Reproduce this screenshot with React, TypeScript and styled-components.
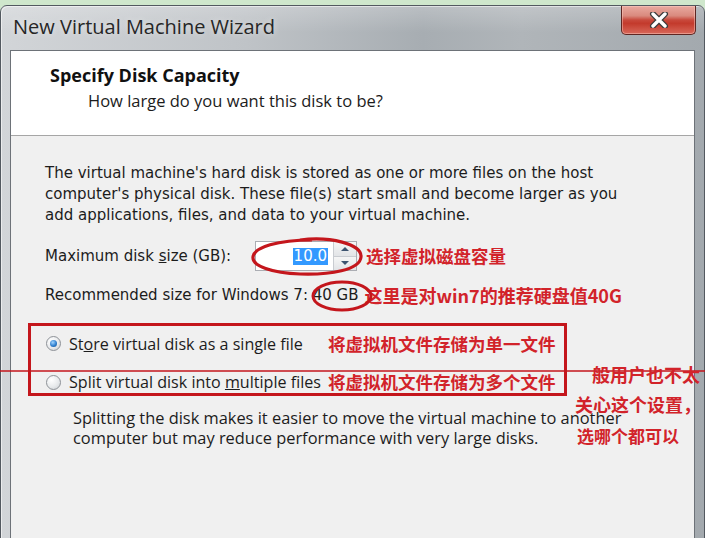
import React from "react";
import styled, { createGlobalStyle } from "styled-components";

const Global = createGlobalStyle`
  html, body { margin: 0; padding: 0; background: #cfe7cc; }
  body { font-family: "DejaVu Sans", sans-serif; }
`;

const RED = "#d2232a";
const STROKE = "#c4161c";

const Page = styled.div`
  position: relative;
  width: 705px;
  height: 538px;
  overflow: hidden;
  background: #cfe7cc;
  padding-top: 5px;
  box-sizing: border-box;
  display: flex;
  flex-direction: column;
`;

const Window = styled.div`
  flex: 1;
  display: flex;
  flex-direction: column;
  background: linear-gradient(90deg, #d2d5d8 0%, #bfc3c7 35%, #a7adb2 60%, #b0b5b9 74%, #a3a9ae 100%);
  border: 1px solid #535960;
  border-bottom: none;
  border-radius: 7px 7px 0 0;
  box-shadow: inset 1px 1px 0 rgba(255, 255, 255, 0.55);
`;

const TitleBar = styled.div`
  height: 44px;
  display: flex;
  justify-content: space-between;
  align-items: flex-start;
  background: linear-gradient(180deg, rgba(255,255,255,0.22) 0%, rgba(255,255,255,0) 60%);
`;

const Title = styled.div`
  font-family: "Open Sans", sans-serif;
  font-size: 20px;
  line-height: 28px;
  color: #262626;
  margin: 7px 0 0 12px;
  text-shadow: 0 0 6px rgba(255, 255, 255, 0.6);
`;

const CloseButton = styled.div`
  width: 75px;
  height: 29px;
  margin-right: 8px;
  box-sizing: border-box;
  border: 1px solid #5e2622;
  border-top: none;
  border-radius: 0 0 5px 5px;
  background: linear-gradient(180deg, #e9aaa0 0%, #d98a7e 35%, #c8493c 50%, #c33a2c 62%, #d8685a 100%);
  box-shadow: inset 0 0 0 1px rgba(255, 210, 200, 0.45);
  display: flex;
  align-items: center;
  justify-content: center;
`;

const Client = styled.div`
  flex: 1;
  margin: 0 9px;
  border: 1px solid #6d7278;
  border-bottom: none;
  background: #f0f0f0;
  display: flex;
  flex-direction: column;
`;

const Header = styled.div`
  height: 85px;
  box-sizing: border-box;
  background: #ffffff;
  border-bottom: 1px solid #a6a6a6;
  padding: 13px 0 0 39px;
  font-family: "Open Sans", sans-serif;
`;

const HeaderTitle = styled.div`
  font-size: 18px;
  font-weight: 700;
  line-height: 22px;
  color: #111;
`;

const HeaderSub = styled.div`
  font-size: 16.5px;
  line-height: 22px;
  color: #1c1c1c;
  margin: 4px 0 0 38px;
`;

const Body = styled.div`
  flex: 1;
  padding-top: 27px;
  display: flex;
  flex-direction: column;
`;

const Para = styled.p`
  margin: 0 0 0 34px;
  font-size: 15px;
  line-height: 21px;
  color: #1c1c1c;
  white-space: nowrap;
`;

const FieldRow = styled.div<{ $h: number; $mt: number }>`
  display: flex;
  align-items: center;
  height: ${(p) => p.$h}px;
  margin: ${(p) => p.$mt}px 0 0 34px;
  font-size: 15px;
  color: #1c1c1c;
  white-space: nowrap;
`;

const FieldLabel = styled.span`
  width: 210px;
`;

const SpinBox = styled.div`
  width: 102px;
  height: 30px;
  box-sizing: border-box;
  border: 1px solid #abadb3;
  background: #fff;
  display: flex;
  align-items: stretch;
`;

const SpinValue = styled.div`
  flex: 1;
  display: flex;
  align-items: center;
  justify-content: flex-end;
  padding-right: 5px;
`;

const Selected = styled.span`
  background: #3399ff;
  color: #fff;
  font-size: 15px;
  line-height: 17px;
  padding: 0 1px;
`;

const SpinButtons = styled.div`
  width: 22px;
  display: flex;
  flex-direction: column;
  border-left: 1px solid #c9ccd1;
`;

const SpinBtn = styled.div<{ $down?: boolean }>`
  flex: 1;
  display: flex;
  align-items: center;
  justify-content: center;
  background: linear-gradient(180deg, #f6f6f6, #e2e4e7);
  border-bottom: ${(p) => (p.$down ? "none" : "1px solid #c9ccd1")};
`;

const Arrow = styled.span<{ $down?: boolean }>`
  width: 0;
  height: 0;
  border-left: 4px solid transparent;
  border-right: 4px solid transparent;
  ${(p) => (p.$down ? "border-top: 4px solid #3d5470;" : "border-bottom: 4px solid #3d5470;")}
`;

const Mark = styled.span<{ $ml?: number; $size?: number }>`
  font-family: "Noto Sans CJK SC", sans-serif;
  font-weight: 700;
  font-size: ${(p) => p.$size ?? 17.5}px;
  line-height: 22px;
  color: ${RED};
  margin-left: ${(p) => p.$ml ?? 0}px;
  white-space: nowrap;
`;

const RadioBox = styled.div`
  margin: 16px 0 0 17px;
  width: 539px;
  height: 73px;
  box-sizing: border-box;
  border: 3px solid ${STROKE};
  padding-left: 15px;
  display: grid;
  grid-template-columns: 282px auto;
  grid-template-rows: 36px 31px;
`;

const RadioCell = styled.label<{ $end?: boolean }>`
  display: flex;
  align-items: ${(p) => (p.$end ? "flex-end" : "center")};
  gap: 8px;
  font-family: "Open Sans", sans-serif;
  font-size: 16.1px;
  line-height: 20px;
  color: #1c1c1c;
  white-space: nowrap;
  padding-bottom: ${(p) => (p.$end ? 1 : 0)}px;
`;

const MarkCell = styled.div<{ $end?: boolean }>`
  display: flex;
  align-items: ${(p) => (p.$end ? "flex-end" : "center")};
`;

const RadioCircle = styled.span<{ $checked?: boolean }>`
  width: 15px;
  height: 15px;
  flex: none;
  box-sizing: border-box;
  border-radius: 50%;
  border: 1px solid #8e9297;
  background: radial-gradient(circle at 35% 30%, #ffffff 0%, #e8eaec 55%, #c9cdd1 100%);
  display: flex;
  align-items: center;
  justify-content: center;
  margin-bottom: 2px;
  &::after {
    content: "";
    display: ${(p) => (p.$checked ? "block" : "none")};
    width: 7px;
    height: 7px;
    border-radius: 50%;
    background: radial-gradient(circle at 40% 35%, #9fd3ff 0%, #2f7fcf 55%, #164f8a 100%);
  }
`;

const Note = styled.p`
  margin: 12px 0 0 62px;
  font-family: "Open Sans", sans-serif;
  font-size: 16.4px;
  line-height: 20px;
  color: #1c1c1c;
  white-space: nowrap;
`;

const Overlay = styled.svg`
  position: absolute;
  left: 0;
  top: 0;
  pointer-events: none;
`;

const SideNote = styled.div<{ $x: number; $y: number; $size: number }>`
  position: absolute;
  left: ${(p) => p.$x}px;
  top: ${(p) => p.$y}px;
  font-family: "Noto Sans CJK SC", sans-serif;
  font-weight: 700;
  font-size: ${(p) => p.$size}px;
  line-height: 20px;
  color: ${RED};
  white-space: nowrap;
`;

export default function App() {
  return (
    <>
      <Global />
      <Page>
        <Window>
          <TitleBar>
            <Title>New Virtual Machine Wizard</Title>
            <CloseButton>
              <svg width="20" height="16" viewBox="0 0 20 16">
                <path d="M4 2 L16 14 M16 2 L4 14" stroke="#3b3b3b" strokeWidth="6" strokeLinecap="round" />
                <path d="M4 2 L16 14 M16 2 L4 14" stroke="#ffffff" strokeWidth="3.4" strokeLinecap="round" />
              </svg>
            </CloseButton>
          </TitleBar>
          <Client>
            <Header>
              <HeaderTitle>Specify Disk Capacity</HeaderTitle>
              <HeaderSub>How large do you want this disk to be?</HeaderSub>
            </Header>
            <Body>
              <Para>
                The virtual machine's hard disk is stored as one or more files on the host
                <br />
                computer's physical disk. These file(s) start small and become larger as you
                <br />
                add applications, files, and data to your virtual machine.
              </Para>
              <FieldRow $h={30} $mt={15}>
                <FieldLabel>
                  Maximum disk <u>s</u>ize (GB):
                </FieldLabel>
                <SpinBox>
                  <SpinValue>
                    <Selected>10.0</Selected>
                  </SpinValue>
                  <SpinButtons>
                    <SpinBtn>
                      <Arrow />
                    </SpinBtn>
                    <SpinBtn $down>
                      <Arrow $down />
                    </SpinBtn>
                  </SpinButtons>
                </SpinBox>
                <Mark $ml={9}>选择虚拟磁盘容量</Mark>
              </FieldRow>
              <FieldRow $h={24} $mt={12}>
                <span>Recommended size for Windows 7: 40 GB</span>
                <Mark $ml={6} $size={18}>这里是对win7的推荐硬盘值40G</Mark>
              </FieldRow>
              <RadioBox>
                <RadioCell>
                  <RadioCircle $checked />
                  <span>
                    St<u>o</u>re virtual disk as a single file
                  </span>
                </RadioCell>
                <MarkCell>
                  <Mark>将虚拟机文件存储为单一文件</Mark>
                </MarkCell>
                <RadioCell $end>
                  <RadioCircle />
                  <span>
                    Split virtual disk into <u>m</u>ultiple files
                  </span>
                </RadioCell>
                <MarkCell $end>
                  <Mark>将虚拟机文件存储为多个文件</Mark>
                </MarkCell>
              </RadioBox>
              <Note>
                Splitting the disk makes it easier to move the virtual machine to another
                <br />
                computer but may reduce performance with very large disks.
              </Note>
            </Body>
          </Client>
        </Window>

        <Overlay width="705" height="538" viewBox="0 0 705 538">
          <path
            d="M300 240 C 330 236, 362 244, 361 257 C 360 270, 330 275, 300 274 C 272 273, 252 266, 253 257 C 254 247, 278 240, 312 240"
            fill="none"
            stroke={STROKE}
            strokeWidth="3.2"
          />
          <ellipse cx="342" cy="296" rx="29" ry="14" fill="none" stroke={STROKE} strokeWidth="3" />
          <line x1="0" y1="371" x2="705" y2="371" stroke={STROKE} strokeWidth="1.6" />
        </Overlay>
        <SideNote $x={592} $y={364} $size={18}>般用户也不太</SideNote>
        <SideNote $x={575} $y={394} $size={18}>关心这个设置，</SideNote>
        <SideNote $x={577} $y={426} $size={17}>选哪个都可以</SideNote>
      </Page>
    </>
  );
}
